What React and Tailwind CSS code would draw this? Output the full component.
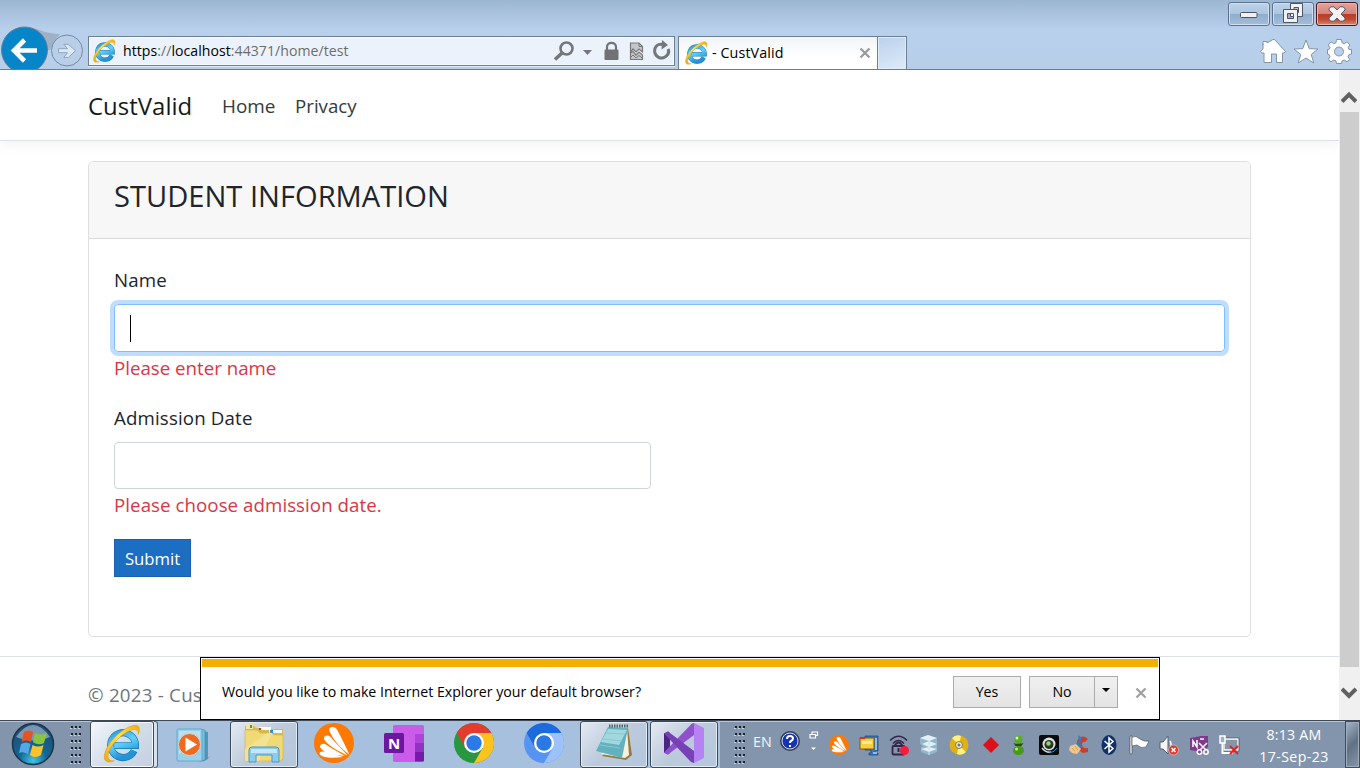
import React from 'react';

function IE({ className }) {
  return (
    <svg viewBox="0 0 32 32" className={className}>
      <defs>
        <linearGradient id="ieBlue" x1="0" y1="0" x2="0.4" y2="1">
          <stop offset="0" stopColor="#2e9fdc" />
          <stop offset="0.5" stopColor="#64d0f8" />
          <stop offset="1" stopColor="#2193d6" />
        </linearGradient>
        <linearGradient id="ieGold" x1="1" y1="0" x2="0" y2="1">
          <stop offset="0" stopColor="#f3ae05" />
          <stop offset="0.45" stopColor="#ffe052" />
          <stop offset="1" stopColor="#efa90c" />
        </linearGradient>
      </defs>
      <path d="M9 17.8H28.2A11.2 11.2 0 1 0 27 22.6" fill="none" stroke="#1778ba" strokeWidth="6.4" transform="translate(1.8 1.4) scale(.91)" />
      <path d="M9 17.8H28.2A11.2 11.2 0 1 0 27 22.6" fill="none" stroke="url(#ieBlue)" strokeWidth="5.2" transform="translate(1.8 1.4) scale(.91)" />
      <path d="M10 30.2C5 32.5 1 30.6 2 25.5 3.600 16 15.500 3.800 25.500 1.200 30.500.200 31.700 3 29.800 8.500 30 4.600 27.500 3.600 23.500 5.200 14.500 8.800 5.800 19 5 25.500 4.600 29 6.700 30.600 10 30.200Z" fill="url(#ieGold)" stroke="#d99404" strokeWidth=".4" />
    </svg>
  );
}

function Avast({ className }) {
  return (
    <svg viewBox="0 0 40 40" className={className}>
      <circle cx="20" cy="20" r="20" fill="#ff7800" />
      <path d="M15.500 8C14 3.500 20.500 2.500 23 6.500C27 14 31 22 35.500 32C28 26 19 17 15.500 8ZM10 16C9.500 12 14.500 11.500 17 14.500C22 20.500 28 26 33.500 32.500C24 28 13 22 10 16ZM6 24C6 20.500 10 20 12.500 22C18 26 25 29 31 33C20 32 9 30 6 24ZM5.500 31C5 28.500 9 28 12 29C18 31 24 32 29 34C20 35 9 35.500 5.500 31Z" fill="#fff" />
    </svg>
  );
}

function WindowButton({ children, danger }) {
  return (
    <div className={danger
      ? 'flex h-[24px] w-[42px] items-center justify-center rounded-[3px] border border-[#4d1820] bg-[linear-gradient(#e2a49b_0%,#d4837a_48%,#b83b25_50%,#bf4b33_75%,#d88972_100%)] shadow-[inset_0_0_0_1px_#e8b5ac]'
      : 'flex h-[24px] w-[42px] items-center justify-center rounded-[3px] border border-[#5b7290] bg-[linear-gradient(#bdd2e8_0%,#adc6df_48%,#8faccb_50%,#a3bedb_100%)] shadow-[inset_0_0_0_1px_#cfdff0]'}>
      {children}
    </div>
  );
}

function Browser() {
  return (
    <header className="flex h-[70px] shrink-0 flex-col border-b border-[#6b7f97] bg-[linear-gradient(#9cb6d2_0px,#b9d0ec_30px,#b8cfea_69px)]">
      <div className="flex h-[36px] items-start justify-end gap-[2px] pr-[2px] pt-[2px]">
        <WindowButton>
          <svg viewBox="0 0 18 6" className="mt-[1px] h-[6px] w-[18px]"><rect x=".5" y=".5" width="16.500" height="5" rx="1" fill="#f1f1f1" stroke="#4d5565" /></svg>
        </WindowButton>
        <WindowButton>
          <svg viewBox="0 0 22 20" className="mt-[-2px] h-[20px] w-[22px]">
            <path d="M8.500 .5H20.500V13.500H8.500ZM12 4.500V9.500H16.500V4.500Z" fill="#f4f4f4" stroke="#4d5565" fillRule="evenodd" />
            <path d="M1.500 6.500H15.500V19.500H1.500ZM5.500 10.500V15.500H11.500V10.500Z" fill="#f0f0f0" stroke="#4d5565" fillRule="evenodd" />
          </svg>
        </WindowButton>
        <WindowButton danger>
          <svg viewBox="0 0 18 16" className="mt-[-1px] h-[16px] w-[18px]">
            <path d="M1 2.500 3 .800H6L9 4 12 .800H15L17 2.500V4L13 8 17 12V13.500L15 15.200H12L9 12 6 15.200H3L1 13.500V12L5 8 1 4Z" fill="#f1f1f1" stroke="#51576b" />
          </svg>
        </WindowButton>
      </div>
      <div className="relative flex h-[33px] items-start">
        <svg viewBox="0 0 88 43" className="absolute left-0 top-[-10px] h-[43px] w-[88px]">
          <path d="M30 1C41 4 47 8 60 8L54 16 50 24H40Z" fill="#9fb1c6" />
          <circle cx="24.500" cy="24" r="23" fill="#0785c9" stroke="#6c7f93" />
          <path d="M37 24.500H15M24.500 14 14 24.500 24.500 35" fill="none" stroke="#fff" strokeWidth="4.600" />
          <circle cx="67" cy="24.500" r="15.500" fill="#b9cfe8" stroke="#748aa5" />
          <path d="M58.500 22.700H67.500L63.800 18.300H68.300L75.500 24.700 68.300 31.500H63.800L67.500 26.700H58.500Z" fill="#dce8f5" stroke="#8fa5bf" />
        </svg>
        <div className="ml-[88px] flex h-[30px] w-[587px] items-center border border-[#6b7f97] bg-[#ebf2fb] pl-[3px] pr-[3px] shadow-[inset_0_0_0_1px_#f7faff,0_1px_0_#dfebf9]">
          <IE className="mt-[-1px] h-[24px] w-[24px] shrink-0" />
          <div className="ml-[7px] flex-1 whitespace-nowrap text-[14.1px] tracking-[0.04px] text-[#6d6d6d]"><span className="text-black">https</span>://<span className="text-black">localhost</span>:44371/home/test</div>
          <svg viewBox="0 0 118 24" className="h-[24px] w-[118px]">
            <circle cx="13.500" cy="9.500" r="6" fill="none" stroke="#747677" strokeWidth="2.600" />
            <path d="M9 14 2 20.500" stroke="#747677" strokeWidth="3.500" />
            <path d="M30 11H39L34.500 16Z" fill="#747677" />
            <rect x="51.500" y="10.500" width="14" height="10.500" rx="1" fill="#707273" />
            <path d="M54 11V8C54 2.500 63 2.500 63 8V11" fill="none" stroke="#707273" strokeWidth="2.200" />
            <path d="M77.500 13V4H86L89.500 7.500V13L86 10 83 13 80 10ZM77.500 20.500V14L80 12.500 83 16 86 13 89.500 16V20.500Z" fill="#c3c6ca" stroke="#77797b" strokeWidth="1.200" /><path d="M86 4V7.500H89.500ZM78 18 80 16 83 19 86 16.500 89 19" fill="none" stroke="#77797b" />
            <path d="M110 5.500C103.500 3.800 101.300 9 101.700 13C102.400 18 108 20.500 112 18C115 16 116.500 13 115 10" fill="none" stroke="#747677" strokeWidth="3" />
            <path d="M109 1 115 6 108.500 10.500Z" fill="#747677" />
          </svg>
        </div>
        <div className="ml-[3px] flex h-[33px] w-[200px] items-center border border-b-0 border-[#6b7f97] bg-[linear-gradient(#f1f4f8,#ffffff_60%)] pl-[5px] pr-[6px]">
          <IE className="mt-[-1px] h-[24px] w-[24px] shrink-0" />
          <div className="ml-[4px] flex-1 whitespace-nowrap text-[14.3px] tracking-[0.1px] text-black">- CustValid</div>
          <svg viewBox="0 0 12 12" className="h-[12px] w-[12px]"><path d="m1.500 1.500 9 9M10.500 1.500l-9 9" stroke="#9b9b9b" strokeWidth="2.300" /></svg>
        </div>
        <div className="h-[33px] w-[29px] border border-b-0 border-l-0 border-[#6b7f97] bg-[linear-gradient(160deg,#b9d1ed,#dfeaf8)] shadow-[inset_0_0_0_1px_#e1ecf9]" />
        <svg viewBox="0 0 98 30" className="ml-auto mr-[6px] h-[30px] w-[98px]">
          <g fill="#fff" stroke="#8394a8" strokeLinejoin="round">
            <path d="M7 9V5.500H11V7L17 3.500 18.500 3.500 29.500 15.500 28 17H26.500V26.500H20.500V18H15.500V26.500H8V17H6L4.500 15.500 7 13V8Z" />
            <path d="M50 4 53.300 12.700 62 13 55.200 18.500 57.800 27 50 22 42.200 27 44.800 18.500 38 13 46.700 12.700Z" />
            <path fillRule="evenodd" d="M80.500 3.500H85.500L86 6.700 88.300 7.700 91 5.700 93.800 9.100 92 11.500 93 13.500H95.500V18L93 18.500 92 20.800 93.800 23.500 91 25.800 88.300 24 86 25 85.500 27.500H80.500L80 25 77.700 24 75 25.800 72.300 23.500 74 20.800 73 18.500 71.500 18V13.500L73 13.500 74 11.500 72.300 9.100 75 5.700 77.700 7.700 80 6.700ZM83 11A4.500 4.500 0 1 0 83 20A4.500 4.500 0 1 0 83 11" />
          </g>
        </svg>
      </div>
    </header>
  );
}

function Page() {
  return (
    <div className="flex h-[650px] shrink-0 text-[#212529]">
      <main className="flex w-[1339px] flex-col bg-white">
        <nav className="flex h-[71px] shrink-0 items-center border-b border-[#dee2e6] pl-[88px] pt-[2px] shadow-[0_4px_12px_rgba(0,0,0,0.05)]">
          <span className="w-[134px] text-[23.9px] tracking-[0.05px] text-[#16191c]">CustValid</span>
          <span className="w-[73px] text-[18.900px] text-[#343a40]">Home</span>
          <span className="text-[18.700px] text-[#343a40]">Privacy</span>
        </nav>
        <section className="ml-[88px] mt-[20px] h-[476px] w-[1163px] rounded-[5px] border border-[#dfdfdf]">
          <div className="h-[77px] rounded-t-[4px] border-b border-[#dadada] bg-[#f7f7f7] pl-[25px] pt-[14px]">
            <h1 className="whitespace-nowrap text-[29.1px] leading-[40px]">STUDENT INFORMATION</h1>
          </div>
          <div className="flex flex-col items-start pl-[25px] pt-[26px] text-[18.7px] leading-[30px]">
            <label className="h-[39px] tracking-[0.15px]">Name</label>
            <div className="flex h-[48px] w-[1111px] items-center rounded-[4px] border border-[#80bdff] pl-[15px] shadow-[0_0_0_4px_#bfdeff]">
              <span className="h-[27px] w-px bg-black" />
            </div>
            <span className="mt-[1px] whitespace-nowrap text-[#dc3545]">Please enter name</span>
            <label className="mt-[20px] h-[39px] whitespace-nowrap tracking-[0.15px]">Admission Date</label>
            <div className="h-[47px] w-[537px] rounded-[4px] border border-[#ced4da]" />
            <span className="mt-[1px] whitespace-nowrap tracking-[0.06px] text-[#dc3545]">Please choose admission date.</span>
            <button className="mt-[19px] flex h-[38px] w-[77px] items-center justify-center border border-[#1861ac] bg-[#1b6ec2] pt-[2px] text-[16.700px] text-white">Submit</button>
          </div>
        </section>
        <footer className="mt-[19px] h-[64px] border-t border-[#dee2e6] pl-[88px] pt-[23px] text-[18.7px] leading-[30px] text-[#6c757d]"><div className="w-[112px] overflow-hidden whitespace-nowrap tracking-[0.25px]">© 2023 - Cus</div></footer>
      </main>
      <div className="flex w-[21px] flex-col items-center bg-[#f0f0f0]">
        <svg viewBox="0 0 16 14" className="ml-[-1px] mt-[20px] h-[14px] w-[16px] shrink-0"><path d="M1 11.500 8 4.500 15 11.500" fill="none" stroke="#606060" strokeWidth="4" /></svg>
        <div className="mt-[8px] h-[555px] w-[19px] bg-[#cdcdcd]" />
        <svg viewBox="0 0 16 14" className="ml-[-1px] mt-[19px] h-[14px] w-[16px] shrink-0"><path d="M1 3 8 10 15 3" fill="none" stroke="#606060" strokeWidth="4" /></svg>
      </div>
    </div>
  );
}

function Notification() {
  return (
    <div className="absolute left-[200px] top-[657px] flex h-[63px] w-[960px] flex-col border border-black bg-white p-px text-[14.2px] text-black">
      <div className="h-[8px] shrink-0 bg-[#f4b000]" />
      <div className="flex flex-1 items-center pb-[2px] pl-[20px] pr-[11px]">
        <span className="flex-1 whitespace-nowrap">Would you like to make Internet Explorer your default browser?</span>
        <button className="h-[32px] w-[68px] border border-[#ababab] bg-[linear-gradient(#f0f0f0,#e4e4e4)] pt-px">Yes</button>
        <button className="ml-[8px] h-[32px] w-[66px] border border-[#ababab] bg-[linear-gradient(#f0f0f0,#e4e4e4)] pt-px">No</button>
        <button className="flex h-[32px] w-[23px] items-center justify-center border border-l-0 border-[#ababab] bg-[linear-gradient(#f0f0f0,#e4e4e4)]">
          <svg viewBox="0 0 8 4" className="ml-[-1px] mt-[-3px] h-[4px] w-[8px]"><path d="M0 0H8L4 4Z" /></svg>
        </button>
        <svg viewBox="0 0 12 12" className="ml-[17px] mt-[2px] h-[12px] w-[12px]"><path d="m1.500 1.500 9 9M10.500 1.500l-9 9" stroke="#a0a0a0" strokeWidth="2.300" /></svg>
      </div>
    </div>
  );
}

const dotRows = [1, 8, 15, 22, 29, 36];
function Grip({ className }) {
  return (
    <svg viewBox="0 0 12 39" className={className}>
      {dotRows.map((y) => (
        <g key={y}>
          {[1, 5, 9].map((x) => (
            <g key={x}><rect x={x - 1} y={y + 1} width="2" height="1" fill="#c7d2e0" /><rect x={x} y={y - 1} width="2" height="2" fill="#1c222c" /></g>
          ))}
        </g>
      ))}
    </svg>
  );
}

function Slot({ active, children }) {
  return (
    <div className={active
      ? 'mr-[2px] flex h-[47px] w-[68px] shrink-0 items-center justify-center rounded-[3px] border border-[#3e4856] bg-[linear-gradient(135deg,#e3eaf3,#bccadb_50%,#b4c7dd)] pb-[3px] shadow-[inset_0_0_0_1px_#e3ebf4]'
      : 'flex h-[47px] w-[70px] shrink-0 items-center justify-center pb-[3px] pr-[2px]'}>
      {children}
    </div>
  );
}

function Apps() {
  return (
    <div className="flex w-[630px] bg-[#a6c0dd]">
      <div className="flex w-[70px] shrink-0">
        <div className="flex h-[47px] w-[64px] items-center justify-center rounded-[3px] border border-[#3e4856] bg-[linear-gradient(135deg,#f4f7fb,#d3ddea_50%,#c3d0e2)] pb-[3px] pr-[2px] shadow-[inset_0_0_0_1px_#f4f8fc]">
          <IE className="h-[39px] w-[39px]" />
        </div>
        <div className="h-[47px] w-[4px] rounded-r-[3px] border border-l-0 border-[#526071] bg-[#d7e1ed]" />
      </div>
      <Slot>
        <svg viewBox="0 0 38 36" className="ml-[-3px] mt-[3px] h-[36px] w-[38px]">
          <path d="M24 35 37 29 31 34Z" fill="#7f9bb8" />
          <path d="M29 4 34 5V32L29 34Z" fill="#4c98be" /><path d="M26 2 31 3V33L26 34Z" fill="#79bddb" stroke="#3c8bb4" strokeWidth=".6" />
          <rect x="3" y="2" width="25" height="32" rx="1" fill="#9bd0e6" stroke="#62aaca" /><path d="M5 4H26V16L5 27Z" fill="#b9e0ef" />
          <circle cx="15.500" cy="17.500" r="11" fill="#f0691d" stroke="#c9d9df" /><path d="M11.500 10.500 23 17.500 11.500 24.500Z" fill="#fff" />
        </svg>
      </Slot>
      <Slot active>
        <svg viewBox="0 0 42 40" className="h-[40px] w-[42px]">
          <path d="M2 5V3H11L13 5H27L29 6H40V37H2Z" fill="#d9b94b" />
          <path d="M3 1H10V6H3Z" fill="#f3e5a3" /><path d="M7 2H9V5H7Z" fill="#3b9c48" /><path d="M16 4H28V7H16Z" fill="#fff" /><path d="M16 5H18V7H16Z" fill="#d83b24" /><path d="M26 7H39V10H26Z" fill="#eef7fc" /><path d="M27 7H30V10H27Z" fill="#268fdb" />
          <path d="M2 7H14L17 10H29L31 12H40V35L38 38H2Z" fill="#f0da78" stroke="#d3b44b" strokeWidth=".7" /><path d="M2 26 24 10H29L16 38H2Z" fill="#f4e291" />
          <path d="M6 39V27Q6 24 9 24H33Q36 24 36 27V39H29V32H13V39Z" fill="#8ccbed" stroke="#4799c7" /><path d="M8 26H34V30H8Z" fill="#c4e6f7" />
        </svg>
      </Slot>
      <Slot><Avast className="h-[40px] w-[40px]" /></Slot>
      <Slot>
        <svg viewBox="0 0 40 38" className="h-[38px] w-[40px]">
          <rect x="9" y="1" width="31" height="37" rx="1.500" fill="#c95de9" /><path d="M31 10H40V19H31Z" fill="#ae45d8" /><path d="M31 19H40V28H31Z" fill="#9332bf" /><path d="M31 28H40V36Q40 37.500 38.500 37.500H31Z" fill="#7719aa" />
          <rect x="0" y="9" width="20" height="20" rx="1.500" fill="#6c17a0" /><text x="4" y="24.500" fill="#fff" fontSize="15" fontWeight="700">N</text>
        </svg>
      </Slot>
      <Slot>
        <svg viewBox="0 0 40 40" className="h-[40px] w-[40px]">
          <circle cx="20" cy="20" r="20" fill="#28973f" /><path d="M2.700 10A20 20 0 0 1 37.300 10H20L11.300 25Z" fill="#e33b2e" /><path d="M20 10H37.300A20 20 0 0 1 20 40L28.700 25Z" fill="#fcc31e" /><circle cx="20" cy="20" r="10" fill="#fff" /><circle cx="20" cy="20" r="7.700" fill="#2a7be9" />
        </svg>
      </Slot>
      <Slot>
        <svg viewBox="0 0 40 40" className="h-[40px] w-[40px]">
          <circle cx="20" cy="20" r="20" fill="#5794f1" /><path d="M2.700 10A20 20 0 0 1 37.300 10H20L11.300 25Z" fill="#1b6bdc" /><path d="M20 10H37.300A20 20 0 0 1 20 40L28.700 25Z" fill="#9dc1fa" /><circle cx="20" cy="20" r="10" fill="#fff" /><circle cx="20" cy="20" r="7.700" fill="#2a79e5" />
        </svg>
      </Slot>
      <Slot active>
        <svg viewBox="0 0 40 38" className="h-[38px] w-[40px]">
          <path d="M34 4 38 31 32 36 8 32Z" fill="#997b39" /><path d="M33 4 35 31 31 34 7 30Z" fill="#f4f2df" /><path d="M14 3 34 4 28 34 2 27Z" fill="#61b2be" /><path d="M14 5 33 6 25 21 7 18Z" fill="#a1d8dd" /><path d="M15 2H34" stroke="#5c6469" strokeWidth="3" strokeDasharray="1.500 1" /><path d="M12 9 31 10M9 15 28 17M6 21 26 24" stroke="#8ac7ce" />
        </svg>
      </Slot>
      <Slot active>
        <svg viewBox="0 0 40 40" className="h-[40px] w-[40px]">
          <path d="M0 10.500 4 8.500 6 10V30L4 31.500 0 29.500Z" fill="#4c2584" /><path d="M4 31.500 0 29.500 28 .5 30 0V12Z" fill="#8f52cc" /><path d="M0 10.500 4 8.500 30 28V40L27 39Z" fill="#7740b5" /><path d="M30 0 40 5V35L30 40Z" fill="#b681f4" />
        </svg>
      </Slot>
    </div>
  );
}

function TrayIcons() {
  const cell = 'flex w-[30px] shrink-0 items-center justify-center';
  const icon = 'h-[20px] w-[20px] overflow-visible';
  return (
    <div className="flex h-[48px] w-[420px]">
      <div className={cell}><Avast className="h-[20px] w-[20px]" /></div>
      <div className={cell}><svg viewBox="0 0 20 20" className={icon}><path d="M6 1H19V16H16V18H19V20H10V18H12V15H6Z" fill="#3978bd" stroke="#173f79" strokeWidth=".7" /><path d="M17 3V15M14 18H18" stroke="#add7f9" strokeWidth="1.500" /><rect x="1" y="3" width="14" height="11" fill="#f8ce43" stroke="#7c5f10" /><path d="M3 6H13V9H3Z" fill="#ffec9b" /><path d="M1 2H6V4H1Z" fill="#e52a20" /></svg></div>
      <div className={cell}><svg viewBox="0 0 20 20" className={icon}><path d="M1 5.500Q10-3 18 5.500M4 8.500Q9.500 2.500 15 8.500" fill="none" stroke="#352549" strokeWidth="1.600" /><path d="M6 12V10Q9.500 5 13 10V12" fill="none" stroke="#352549" strokeWidth="1.800" /><rect x="3.500" y="11" width="12" height="8.500" rx="1" fill="none" stroke="#352549" strokeWidth="1.800" /><path d="M9.500 13V17" stroke="#352549" strokeWidth="2" /><circle cx="15.500" cy="15.500" r="4.500" fill="#f51d3d" /></svg></div>
      <div className={cell}><svg viewBox="0 0 20 20" className={icon}><path d="M1 3 9 0 18 3V17L10 20 2 17V12L4 11 1 9Z" fill="#94b6cb" /><path d="M1 3 9 0 18 3 10 6ZM3 9 10 6 18 9 10 12ZM2 14 10 12 18 14 10 17Z" fill="#e2f1f7" /><path d="M10 6V10M10 12V15M10 17V20" stroke="#c9e2ee" /></svg></div>
      <div className={cell}><svg viewBox="0 0 20 20" className={icon}><circle cx="10" cy="10" r="9.500" fill="#dfb115" /><path d="M10 10 3 3Q7-1 12 1ZM10 10 17 17Q13 21 8 19Z" fill="#fff184" /><circle cx="10" cy="10" r="3.500" fill="#e6e7df" stroke="#9d7b1c" /><circle cx="10" cy="10" r="1.500" fill="#69798d" /></svg></div>
      <div className={cell}><svg viewBox="0 0 20 20" className={icon}><path d="M12 2 20 10 12 18 4 10Z" fill="#dd101c" /></svg></div>
      <div className={cell}><svg viewBox="0 0 20 20" className={icon}><path d="M8 7H12V12H8Z" fill="#418917" /><ellipse cx="9.500" cy="15.500" rx="5.500" ry="4.500" fill="#499819" /><circle cx="9.500" cy="4.500" r="4" fill="#5cac29" /><path d="M4.500 8Q9.500 10 14.500 8L12.500 11H6.500Z" fill="#254d19" /><circle cx="8" cy="3" r="1.500" fill="#d4f5b1" /><circle cx="7.500" cy="14" r="1.500" fill="#b8ed84" /></svg></div>
      <div className={cell}><svg viewBox="0 0 20 20" className={icon}><rect x="0" y="0" width="20" height="20" rx="2" fill="#090a0b" /><circle cx="10" cy="9" r="6.500" fill="#dce2e1" /><circle cx="10" cy="9.500" r="4.500" fill="#26382a" /><circle cx="9.500" cy="8.500" r="2.200" fill="#9fcf6b" /><path d="M3 13Q7 18 12 17" stroke="#d9dcdd" strokeWidth="1.500" fill="none" /><path d="M10 18Q16 17 18 13" stroke="#1d9cd8" fill="none" /></svg></div>
      <div className={cell}><svg viewBox="0 0 20 20" className={icon}><path d="M19 4Q13-2 8 6Q7 15 14 18L19 17V13Q14 14 13 10Q13 6 16 7Z" fill="#cd3d2d" /><path d="M9 0 13 3 11 8 13 12 10 13 7 9 10 6Z" fill="#2e80bd" /><path d="M1 11 7 9 12 14 8 19 3 18 0 15Z" fill="#edc688" /><path d="M3 13 6 16M6 11 9 15" stroke="#d3a368" /></svg></div>
      <div className={cell}><svg viewBox="0 0 20 20" className={icon}><ellipse cx="10" cy="10" rx="7.500" ry="10" fill="#103269" /><path d="M5.500 6 14 13.500 10 17V3L14 6.500 5.500 14" fill="none" stroke="#fff" strokeWidth="1.500" /></svg></div>
      <div className={cell}><svg viewBox="0 0 20 20" className={icon}><path d="M1 1H3V19H1Z" fill="#fff" stroke="#434c58" strokeWidth=".7" /><path d="M3 2Q7 0 11 4Q15 7 20 6L17 12Q12 14 8 10L3 11Z" fill="#fff" stroke="#505966" strokeWidth=".7" /></svg></div>
      <div className={cell}><svg viewBox="0 0 20 20" className={icon}><path d="M1 7H4L9 1V19L4 14H1Z" fill="#f6f6f6" stroke="#54606e" /><path d="M11 6Q13 9 11 14" fill="none" stroke="#fff" strokeWidth="1.500" /><circle cx="14.500" cy="15" r="5" fill="#db3e31" stroke="#f5b9b0" strokeWidth=".7" /><path d="m12.500 13 4 4m0-4-4 4" stroke="#fff" strokeWidth="1.500" /></svg></div>
      <div className={cell}><svg viewBox="0 0 20 20" className={icon}><path d="M1 3 12 1H19V12L13 17 1 15Z" fill="#80398d" /><path d="M4 12V6L8 12V5" stroke="#fff" strokeWidth="1.500" fill="none" /><path d="M11 4H15M10 8l7 7M18 8l-7 7" stroke="#f7f0fa" strokeWidth="1.700" /><circle cx="10.500" cy="17" r="2.200" fill="#80398d" stroke="#fff" strokeWidth="1.500" /><circle cx="17" cy="17" r="2.200" fill="#8b7e9f" stroke="#fff" strokeWidth="1.500" /></svg></div>
      <div className={cell}><svg viewBox="0 0 20 20" className={icon}><path d="M5 4H19V15H5Z" fill="#7c8999" stroke="#26303c" strokeWidth="2.600" /><path d="M5 4H19V15H5Z" fill="#8795a7" stroke="#fff" strokeWidth="1.300" /><path d="M1 1H6V8H1Z" fill="#a4b0bf" stroke="#fff" strokeWidth="1.500" /><path d="M3.500 8V18H14" fill="none" stroke="#fff" strokeWidth="2" /><path d="m11 11 8 8m0-8-8 8" stroke="#e31e22" strokeWidth="1.800" /></svg></div>
    </div>
  );
}

function Taskbar() {
  return (
    <div className="flex h-[48px] shrink-0 overflow-hidden border-t border-[#3f4856] bg-[#8395ac] shadow-[inset_0_1px_0_#b5c5d9]">
      <div className="flex w-[90px] items-start">
        <svg viewBox="0 0 44 44" className="ml-[11px] mt-[1px] h-[44px] w-[44px]">
          <defs><radialGradient id="orb" cx="50%" cy="90%" r="85%"><stop offset="0" stopColor="#41c5e9" /><stop offset=".4" stopColor="#126793" /><stop offset="1" stopColor="#244b70" /></radialGradient></defs>
          <circle cx="22" cy="22" r="20.500" fill="url(#orb)" stroke="#18344f" strokeWidth="1.500" /><path d="M5 15Q22-9 39 15Q23 22 5 15Z" fill="#c2d2df" opacity=".55" />
          <path d="M13 10Q18 7 22 10L20 20Q15 17 10.500 20Z" fill="#e65221" /><path d="M24 11Q30 14 36 11L33 21Q27 24 22 20Z" fill="#8bc43f" /><path d="M10 22Q15 19 19.500 22L17 32Q12 29 8 31Z" fill="#55a8e5" /><path d="M21.500 23Q27 26 32.500 23L30 33Q24 37 19 33Z" fill="#fbc32b" />
        </svg>
        <Grip className="ml-[15px] mt-[5px] h-[39px] w-[12px]" />
      </div>
      <Apps />
      <div className="flex flex-1">
        <Grip className="ml-[14px] mt-[5px] h-[39px] w-[12px]" />
        <span className="ml-[7px] mt-[11px] w-[21px] text-[14.3px] leading-[20px] text-[#f3f6f9]">EN</span>
        <svg viewBox="0 0 20 20" className="ml-[6px] mt-[10px] h-[20px] w-[20px]"><circle cx="10" cy="10" r="9" fill="#1733b5" stroke="#343f58" strokeWidth="2" /><circle cx="10" cy="10" r="8" fill="none" stroke="#d1d8e8" /><path d="M7 8Q7 5 10 5Q13 5 13 7.500Q13 9 11 10Q10 10.500 10 12M10 14V16" fill="none" stroke="#fff" strokeWidth="2" /></svg>
        <svg viewBox="0 0 10 20" className="ml-[9px] mt-[10px] h-[20px] w-[10px] overflow-visible"><path d="M3 3V1H8.500V4.500H7M1 3.500H6.500V7H1Z" fill="none" stroke="#fff" strokeWidth="1.200" /><path d="M2 16.500H7L4.500 19Z" fill="#fff" /></svg>
        <div className="ml-[5px]"><TrayIcons /></div>
        <div className="flex w-[101px] flex-col items-center whitespace-nowrap pr-px pt-[3px] text-[14.2px] leading-[22px] text-white"><span className="tracking-[0.2px]">8:13 AM</span><span className="tracking-[0.4px]">17-Sep-23</span></div>
        <div className="h-[47px] w-[15px] border border-[#424d5c] bg-[linear-gradient(135deg,#a7b5c5,#607184_50%,#8798aa)] shadow-[inset_0_0_0_1px_#9dabbc]" />
      </div>
    </div>
  );
}

export default function App() {
  return (
    <div className="relative flex h-[768px] w-[1360px] flex-col overflow-hidden bg-white font-['Open_Sans',sans-serif]">
      <Browser />
      <Page />
      <Notification />
      <Taskbar />
    </div>
  );
}
